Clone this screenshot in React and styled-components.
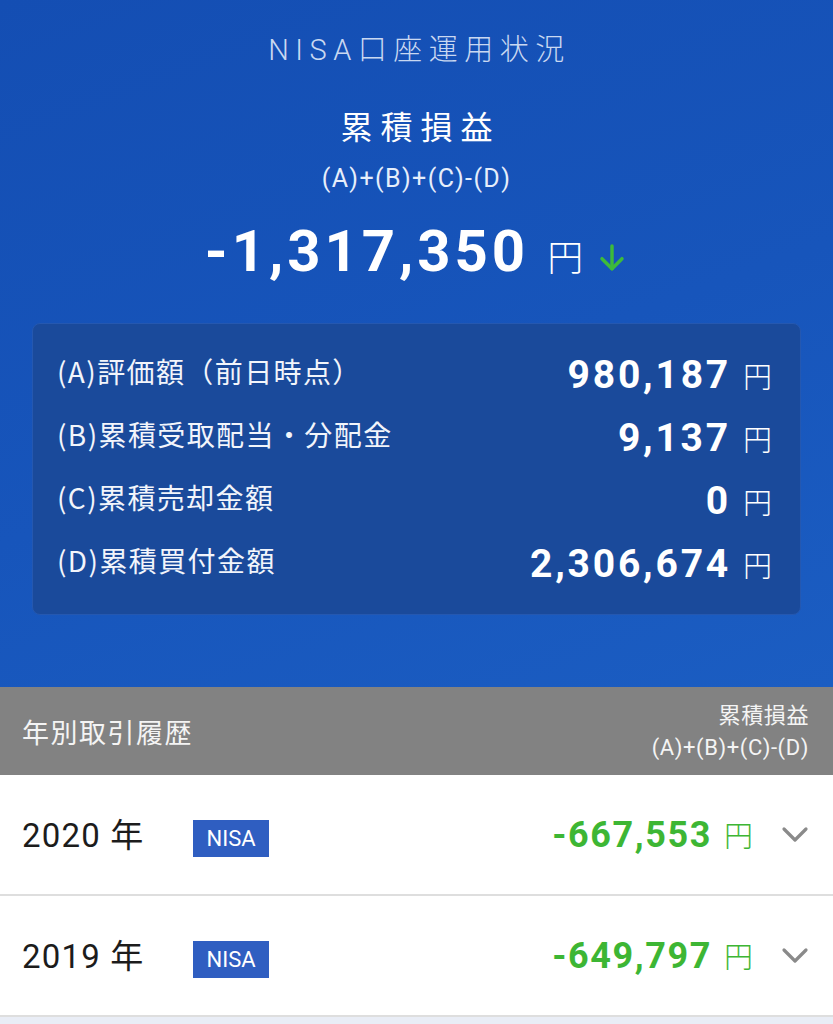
import React from 'react';
import styled, { createGlobalStyle } from 'styled-components';

const GlobalStyle = createGlobalStyle`
  html, body {
    margin: 0;
    padding: 0;
    background: #e9edf6;
  }
  body {
    font-family: Roboto, "Noto Sans CJK JP", sans-serif;
  }
`;

const Page = styled.div`
  width: 833px;
  min-height: 1024px;
  background: #e9edf6;
`;

const Hero = styled.section`
  height: 687px;
  box-sizing: border-box;
  padding-top: 30px;
  background: linear-gradient(160deg, #144eb3 0%, #1755bb 55%, #1b5dc2 100%);
  display: flex;
  flex-direction: column;
  align-items: center;
`;

const Caption = styled.div`
  font-family: Roboto, "Noto Sans CJK JP", sans-serif;
  font-size: 29px;
  font-weight: 300;
  letter-spacing: 6.5px;
  line-height: 40px;
  color: #c9d8f1;
  padding-left: 6px;
`;

const Heading = styled.div`
  margin-top: 34px;
  font-family: "Noto Sans CJK JP", sans-serif;
  font-size: 32px;
  font-weight: 400;
  letter-spacing: 8px;
  padding-left: 8px;
  line-height: 42px;
  color: #ffffff;
`;

const Formula = styled.div`
  margin-top: 18px;
  font-family: Roboto, "Noto Sans CJK JP", sans-serif;
  font-size: 25px;
  line-height: 30px;
  color: #e6eefb;
  letter-spacing: 1.4px;
`;

const TotalLine = styled.div`
  margin-top: 24px;
  display: flex;
  align-items: baseline;
  color: #ffffff;
`;

const TotalValue = styled.span`
  font-family: Roboto, sans-serif;
  font-size: 58px;
  font-weight: 700;
  letter-spacing: 4px;
  line-height: 66px;
`;

const Yen = styled.span`
  font-family: "Noto Sans CJK JP", sans-serif;
  font-weight: 300;
  font-size: ${p => p.$size}px;
  color: ${p => p.$color || '#ffffff'};
  margin-left: ${p => p.$gap || 12}px;
`;

const DownArrow = styled.svg`
  width: 32px;
  height: 32px;
  margin-left: 13px;
  align-self: center;
  margin-top: 14px;
`;

const Card = styled.div`
  margin-top: 39px;
  width: 769px;
  height: 292px;
  box-sizing: border-box;
  padding: 19px 28px 0 24px;
  background: #1a4a9b;
  border: 1px solid #2558b0;
  border-radius: 8px;
  display: flex;
  flex-direction: column;
`;

const CardRow = styled.div`
  height: 63px;
  display: flex;
  align-items: center;
  justify-content: space-between;
`;

const CardLabel = styled.span`
  font-family: "Noto Sans CJK JP", sans-serif;
  font-size: 28px;
  letter-spacing: 1.4px;
  color: #f2f5fb;
  margin-top: -8px;
`;

const CardAmount = styled.span`
  display: flex;
  align-items: baseline;
  color: #ffffff;
`;

const CardValue = styled.span`
  font-family: Roboto, sans-serif;
  font-size: 39px;
  font-weight: 700;
  letter-spacing: 2.8px;
`;

const SectionBar = styled.div`
  height: 88px;
  box-sizing: border-box;
  background: #828282;
  padding: 0 24px 0 22px;
  display: flex;
  align-items: center;
  justify-content: space-between;
  color: #f4f4f4;
`;

const SectionTitle = styled.span`
  font-family: "Noto Sans CJK JP", sans-serif;
  font-size: 27px;
  letter-spacing: 1.5px;
`;

const SectionNote = styled.div`
  display: flex;
  flex-direction: column;
  align-items: flex-end;
  font-family: Roboto, "Noto Sans CJK JP", sans-serif;
  font-size: 22px;
  line-height: 32px;
  letter-spacing: 0.6px;
  margin-top: 2px;
`;

const YearRow = styled.div`
  height: 121px;
  box-sizing: border-box;
  background: #ffffff;
  border-bottom: 2px solid #dedede;
  display: flex;
  align-items: center;
  padding: 0 24px 0 22px;
`;

const Year = styled.span`
  width: 171px;
  font-family: Roboto, "Noto Sans CJK JP", sans-serif;
  font-size: 33px;
  letter-spacing: 1.2px;
  color: #1c1c1c;
  margin-top: -4px;
`;

const Badge = styled.span`
  width: 76px;
  height: 37px;
  display: flex;
  align-items: center;
  justify-content: center;
  background: #2f5ec1;
  color: #ffffff;
  font-family: Roboto, sans-serif;
  font-size: 22px;
  margin-top: 8px;
`;

const RowAmount = styled.span`
  margin-left: auto;
  display: flex;
  align-items: baseline;
  color: #3db634;
`;

const RowValue = styled.span`
  font-family: Roboto, sans-serif;
  font-size: 36px;
  font-weight: 700;
  letter-spacing: 1.6px;
`;

const Chevron = styled.svg`
  width: 28px;
  height: 20px;
  margin-left: 28px;
`;

const Footer = styled.div`
  height: 8px;
  background: #e9edf6;
`;

const details = [
  { label: '(A)評価額（前日時点）', value: '980,187' },
  { label: '(B)累積受取配当・分配金', value: '9,137' },
  { label: '(C)累積売却金額', value: '0' },
  { label: '(D)累積買付金額', value: '2,306,674' },
];

const years = [
  { year: '2020 年', value: '-667,553' },
  { year: '2019 年', value: '-649,797' },
];

const App = () => (
  <Page>
    <GlobalStyle />
    <Hero>
      <Caption>NISA口座運用状況</Caption>
      <Heading>累積損益</Heading>
      <Formula>(A)+(B)+(C)-(D)</Formula>
      <TotalLine>
        <TotalValue>-1,317,350</TotalValue>
        <Yen $size={36} $gap={18}>円</Yen>
        <DownArrow viewBox="0 0 24 24" fill="none" stroke="#3dbb3a" strokeWidth="2.6" strokeLinecap="round" strokeLinejoin="round">
          <path d="M12 3v17" />
          <path d="M4.5 12.5l7.5 7.5 7.5-7.5" />
        </DownArrow>
      </TotalLine>
      <Card>
        {details.map(item => (
          <CardRow key={item.label}>
            <CardLabel>{item.label}</CardLabel>
            <CardAmount>
              <CardValue>{item.value}</CardValue>
              <Yen $size={29} $gap={12}>円</Yen>
            </CardAmount>
          </CardRow>
        ))}
      </Card>
    </Hero>
    <SectionBar>
      <SectionTitle>年別取引履歴</SectionTitle>
      <SectionNote>
        <span>累積損益</span>
        <span>(A)+(B)+(C)-(D)</span>
      </SectionNote>
    </SectionBar>
    {years.map(row => (
      <YearRow key={row.year}>
        <Year>{row.year}</Year>
        <Badge>NISA</Badge>
        <RowAmount>
          <RowValue>{row.value}</RowValue>
          <Yen $size={29} $gap={12} $color="#3db634">円</Yen>
        </RowAmount>
        <Chevron viewBox="0 0 28 20" fill="none" stroke="#8a8a8a" strokeWidth="3.2" strokeLinecap="round" strokeLinejoin="round">
          <path d="M3 4l11 11 11-11" />
        </Chevron>
      </YearRow>
    ))}
    <Footer />
  </Page>
);

export default App;
